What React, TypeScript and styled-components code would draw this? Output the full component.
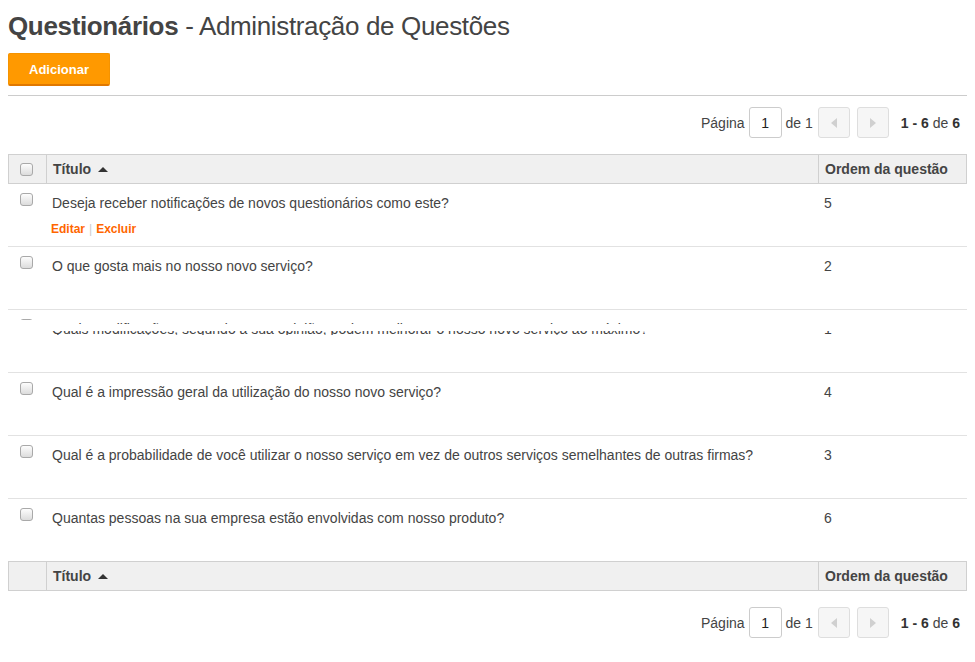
import React from "react";
import styled, { createGlobalStyle, css } from "styled-components";

const Global = createGlobalStyle`
  html, body { padding: 0; background: #fff; }
  body { margin: 8px; font-family: "Liberation Sans", Arial, sans-serif; color: #444; }
`;

const Page = styled.div`
  display: flex;
  flex-direction: column;
  width: 959px;
`;

const Title = styled.h1`
  margin: 0;
  padding-top: 3px;
  font-size: 26px;
  line-height: 30px;
  font-weight: normal;
  color: #444;
  letter-spacing: -0.35px;
  strong { font-weight: bold; }
`;

const Toolbar = styled.div`
  display: flex;
  margin-top: 12px;
  padding-bottom: 9px;
  border-bottom: 1px solid #ccc;
`;

const PrimaryButton = styled.button`
  width: 102px;
  height: 33px;
  background: #ff9900;
  border: 1px solid #f59300;
  border-bottom: 2px solid #e07800;
  border-radius: 2px;
  color: #fff;
  font-family: "Liberation Sans", Arial, sans-serif;
  font-weight: bold;
  font-size: 13px;
  padding: 0;
  cursor: pointer;
`;

const Pager = styled.div<{ $top: number }>`
  display: flex;
  justify-content: flex-end;
  align-items: center;
  height: 31px;
  margin-top: ${(p) => p.$top}px;
  padding-right: 7px;
  font-size: 14px;
  color: #444;
`;

const PagerText = styled.span<{ $gap: number }>`
  margin-right: ${(p) => p.$gap}px;
`;

const PageInput = styled.div`
  width: 33px;
  height: 31px;
  box-sizing: border-box;
  border: 1px solid #ccc;
  border-radius: 3px;
  display: flex;
  align-items: center;
  justify-content: center;
  color: #222;
  margin-right: 4px;
`;

const NavButton = styled.div<{ $gap: number }>`
  width: 32px;
  height: 31px;
  box-sizing: border-box;
  border: 1px solid #dedede;
  border-radius: 3px;
  background: #f6f6f6;
  display: flex;
  align-items: center;
  justify-content: center;
  margin-right: ${(p) => p.$gap}px;
`;

const Count = styled.span`
  b { font-weight: bold; color: #333; }
`;

const Table = styled.div`
  margin-top: 16px;
  display: flex;
  flex-direction: column;
`;

const HeadRow = styled.div`
  display: grid;
  grid-template-columns: 37px 772px 1fr;
  height: 30px;
  box-sizing: border-box;
  border: 1px solid #d0d0d0;
  background: #f0f0f0;
`;

const HeadCell = styled.div<{ $divider?: boolean }>`
  display: flex;
  align-items: center;
  padding-left: 6px;
  font-weight: bold;
  font-size: 14px;
  color: #444;
  border-left: ${(p) => (p.$divider ? "1px solid #d0d0d0" : "none")};
`;

const CheckHeadCell = styled.div`
  display: flex;
  align-items: center;
  padding-left: 11px;
`;

const SortArrow = styled.span`
  display: inline-block;
  width: 0;
  height: 0;
  margin-left: 7px;
  border-left: 5px solid transparent;
  border-right: 5px solid transparent;
  border-bottom: 5px solid #333;
`;

const Check = styled.span`
  display: inline-block;
  width: 13px;
  height: 13px;
  box-sizing: border-box;
  border: 1px solid #a9a9a9;
  border-radius: 3px;
  background: linear-gradient(#fdfdfd, #dcdcdc);
`;

const Row = styled.div`
  display: grid;
  grid-template-columns: 38px 772px 1fr;
  height: 63px;
  box-sizing: border-box;
  border-bottom: 1px solid #e2e2e2;
  &:last-child { border-bottom: none; height: 62px; }
`;

const glitch = css`
  clip-path: polygon(0 0, 100% 0, 100% 5px, 0 5px, 0 12px, 100% 12px, 100% 16px, 0 16px);
`;

const CheckCell = styled.div<{ $glitch?: boolean }>`
  padding: 8px 0 0 12px;
  ${(p) => p.$glitch && css`clip-path: inset(0 0 52px 0);`}
`;

const Cell = styled.div<{ $glitch?: boolean }>`
  padding: 9px 6px 0;
  font-size: 14px;
  line-height: 20px;
  color: #444;
  ${(p) => p.$glitch && css`> div { ${glitch} }`}
`;

const Actions = styled.div`
  margin-top: 8px;
  font-size: 12px;
  line-height: 16px;
  font-weight: bold;
  margin-left: -1px;
  a { color: #ff6600; text-decoration: none; }
`;

const Sep = styled.span`
  color: #ccc;
  font-weight: normal;
  margin: 0 4px;
`;

const Tri = ({ dir }: { dir: "left" | "right" }) => (
  <svg width="6" height="10" viewBox="0 0 6 10">
    {dir === "left" ? <path d="M6 0 L0 5 L6 10 Z" fill="#d0d0d0" /> : <path d="M0 0 L6 5 L0 10 Z" fill="#d0d0d0" />}
  </svg>
);

const Pagination = ({ top }: { top: number }) => (
  <Pager $top={top}>
    <PagerText $gap={4}>Página</PagerText>
    <PageInput>1</PageInput>
    <PagerText $gap={5}>de 1</PagerText>
    <NavButton $gap={7}><Tri dir="left" /></NavButton>
    <NavButton $gap={12}><Tri dir="right" /></NavButton>
    <Count><b>1 - 6</b> de <b>6</b></Count>
  </Pager>
);

const rows = [
  { t: "Deseja receber notificações de novos questionários como este?", o: "5", actions: true },
  { t: "O que gosta mais no nosso novo serviço?", o: "2" },
  { t: "Quais modificações, segundo a sua opinião, podem melhorar o nosso novo serviço ao máximo?", o: "1", glitch: true },
  { t: "Qual é a impressão geral da utilização do nosso novo serviço?", o: "4" },
  { t: "Qual é a probabilidade de você utilizar o nosso serviço em vez de outros serviços semelhantes de outras firmas?", o: "3" },
  { t: "Quantas pessoas na sua empresa estão envolvidas com nosso produto?", o: "6" },
];

export default function App() {
  return (
    <>
      <Global />
      <Page>
        <Title><strong>Questionários</strong> - Administração de Questões</Title>
        <Toolbar>
          <PrimaryButton>Adicionar</PrimaryButton>
        </Toolbar>
        <Pagination top={11} />
        <Table>
          <HeadRow>
            <CheckHeadCell><Check /></CheckHeadCell>
            <HeadCell $divider>Título<SortArrow /></HeadCell>
            <HeadCell $divider>Ordem da questão</HeadCell>
          </HeadRow>
          <div>
            {rows.map((r, i) => (
              <Row key={i}>
                <CheckCell $glitch={r.glitch}><Check /></CheckCell>
                <Cell $glitch={r.glitch}>
                  <div>{r.t}</div>
                  {r.actions && (
                    <Actions>
                      <a href="#">Editar</a>
                      <Sep>|</Sep>
                      <a href="#">Excluir</a>
                    </Actions>
                  )}
                </Cell>
                <Cell $glitch={r.glitch}><div>{r.o}</div></Cell>
              </Row>
            ))}
          </div>
          <HeadRow>
            <CheckHeadCell />
            <HeadCell $divider>Título<SortArrow /></HeadCell>
            <HeadCell $divider>Ordem da questão</HeadCell>
          </HeadRow>
        </Table>
        <Pagination top={16} />
      </Page>
    </>
  );
}
